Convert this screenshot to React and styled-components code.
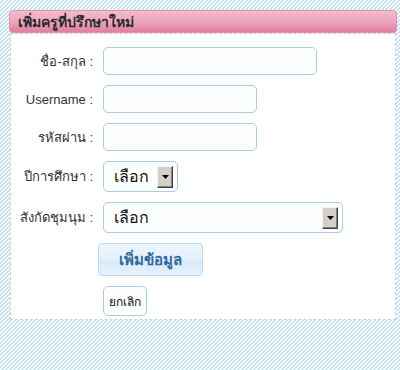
import React from "react";
import styled, { createGlobalStyle } from "styled-components";

const Global = createGlobalStyle`
  html, body { margin: 0; padding: 0; }
  body {
    width: 400px;
    height: 370px;
    overflow: hidden;
    font-family: Tahoma, "Liberation Sans", "DejaVu Sans", sans-serif;
    background-color: #ffffff;
    background-image: repeating-linear-gradient(
      135deg,
      #ffffff 0px,
      #ffffff 1.6px,
      #bfe3f3 1.6px,
      #bfe3f3 2.83px
    );
  }
`;

const Wrapper = styled.div`
  padding: 10px 3px 0 9px;
`;

const Header = styled.div`
  height: 23px;
  box-sizing: border-box;
  border: 1px solid #e590ad;
  border-radius: 4px;
  background: linear-gradient(#f3bccd, #eaa3bb 55%, #e07ea0);
  display: flex;
  align-items: center;
  padding-left: 8px;
  font-size: 14px;
  font-weight: bold;
  color: #2b2b2b;
`;

const Panel = styled.div`
  margin: 0 1px;
  box-sizing: border-box;
  height: 287px;
  background: #ffffff;
  border: 1px dashed #cfcfcf;
  padding: 13px 0 0 0;
  display: flex;
  flex-direction: column;
  gap: 10px;
`;

const Row = styled.div`
  display: flex;
  align-items: center;
  height: ${(p) => p.$h || 28}px;
`;

const Label = styled.div`
  width: 82px;
  text-align: right;
  font-size: 13px;
  color: #333333;
  margin-right: 10px;
  white-space: nowrap;
`;

const Input = styled.div`
  width: ${(p) => p.$w}px;
  height: 28px;
  box-sizing: border-box;
  border: 1px solid #a9cde6;
  border-radius: 5px;
  background: #fdfeff;
`;

const Select = styled.div`
  width: ${(p) => p.$w}px;
  height: 31px;
  box-sizing: border-box;
  border: 1px solid #a9cde6;
  border-radius: 5px;
  background: #fdfeff;
  display: flex;
  align-items: center;
  justify-content: space-between;
  padding: 0 4px 0 10px;
  font-size: 16px;
  color: #111111;
`;

const ArrowBox = styled.div`
  width: 16px;
  height: 22px;
  box-sizing: border-box;
  background: #d4d0c8;
  border-top: 1px solid #f4f3ef;
  border-left: 1px solid #f4f3ef;
  border-right: 1px solid #404040;
  border-bottom: 1px solid #404040;
  box-shadow: inset -1px -1px 0 #808080;
  display: flex;
  align-items: center;
  justify-content: center;
`;

const Indent = styled.div`
  padding-left: ${(p) => p.$pl}px;
`;

const AddButton = styled.div`
  width: 105px;
  height: 33px;
  box-sizing: border-box;
  border: 1px solid #bcd8ee;
  border-radius: 4px;
  background: linear-gradient(#eef6fd, #e3f0fb 50%, #d8eaf8 52%, #e6f2fc);
  display: flex;
  align-items: center;
  justify-content: center;
  font-size: 15px;
  font-weight: bold;
  color: #2c6aa0;
`;

const CancelButton = styled.div`
  width: 44px;
  height: 30px;
  box-sizing: border-box;
  border: 1px solid #a9cde6;
  border-radius: 5px;
  background: #fdfeff;
  display: flex;
  align-items: center;
  justify-content: center;
  font-size: 12px;
  color: #111111;
`;

const Arrow = () => (
  <svg width="7" height="4" viewBox="0 0 7 4">
    <path d="M0 0 H7 L3.5 4 Z" fill="#000" />
  </svg>
);

export default function App() {
  return (
    <>
      <Global />
      <Wrapper>
        <Header>เพิ่มครูที่ปรึกษาใหม่</Header>
        <Panel>
          <Row>
            <Label>ชื่อ-สกุล :</Label>
            <Input $w={214} />
          </Row>
          <Row>
            <Label>Username :</Label>
            <Input $w={154} />
          </Row>
          <Row>
            <Label>รหัสผ่าน :</Label>
            <Input $w={154} />
          </Row>
          <Row $h={31}>
            <Label>ปีการศึกษา :</Label>
            <Select $w={75}>
              <span>เลือก</span>
              <ArrowBox><Arrow /></ArrowBox>
            </Select>
          </Row>
          <Row $h={31}>
            <Label>สังกัดชุมนุม :</Label>
            <Select $w={240}>
              <span>เลือก</span>
              <ArrowBox><Arrow /></ArrowBox>
            </Select>
          </Row>
          <Indent $pl={87}>
            <AddButton>เพิ่มข้อมูล</AddButton>
          </Indent>
          <Indent $pl={92}>
            <CancelButton>ยกเลิก</CancelButton>
          </Indent>
        </Panel>
      </Wrapper>
    </>
  );
}
